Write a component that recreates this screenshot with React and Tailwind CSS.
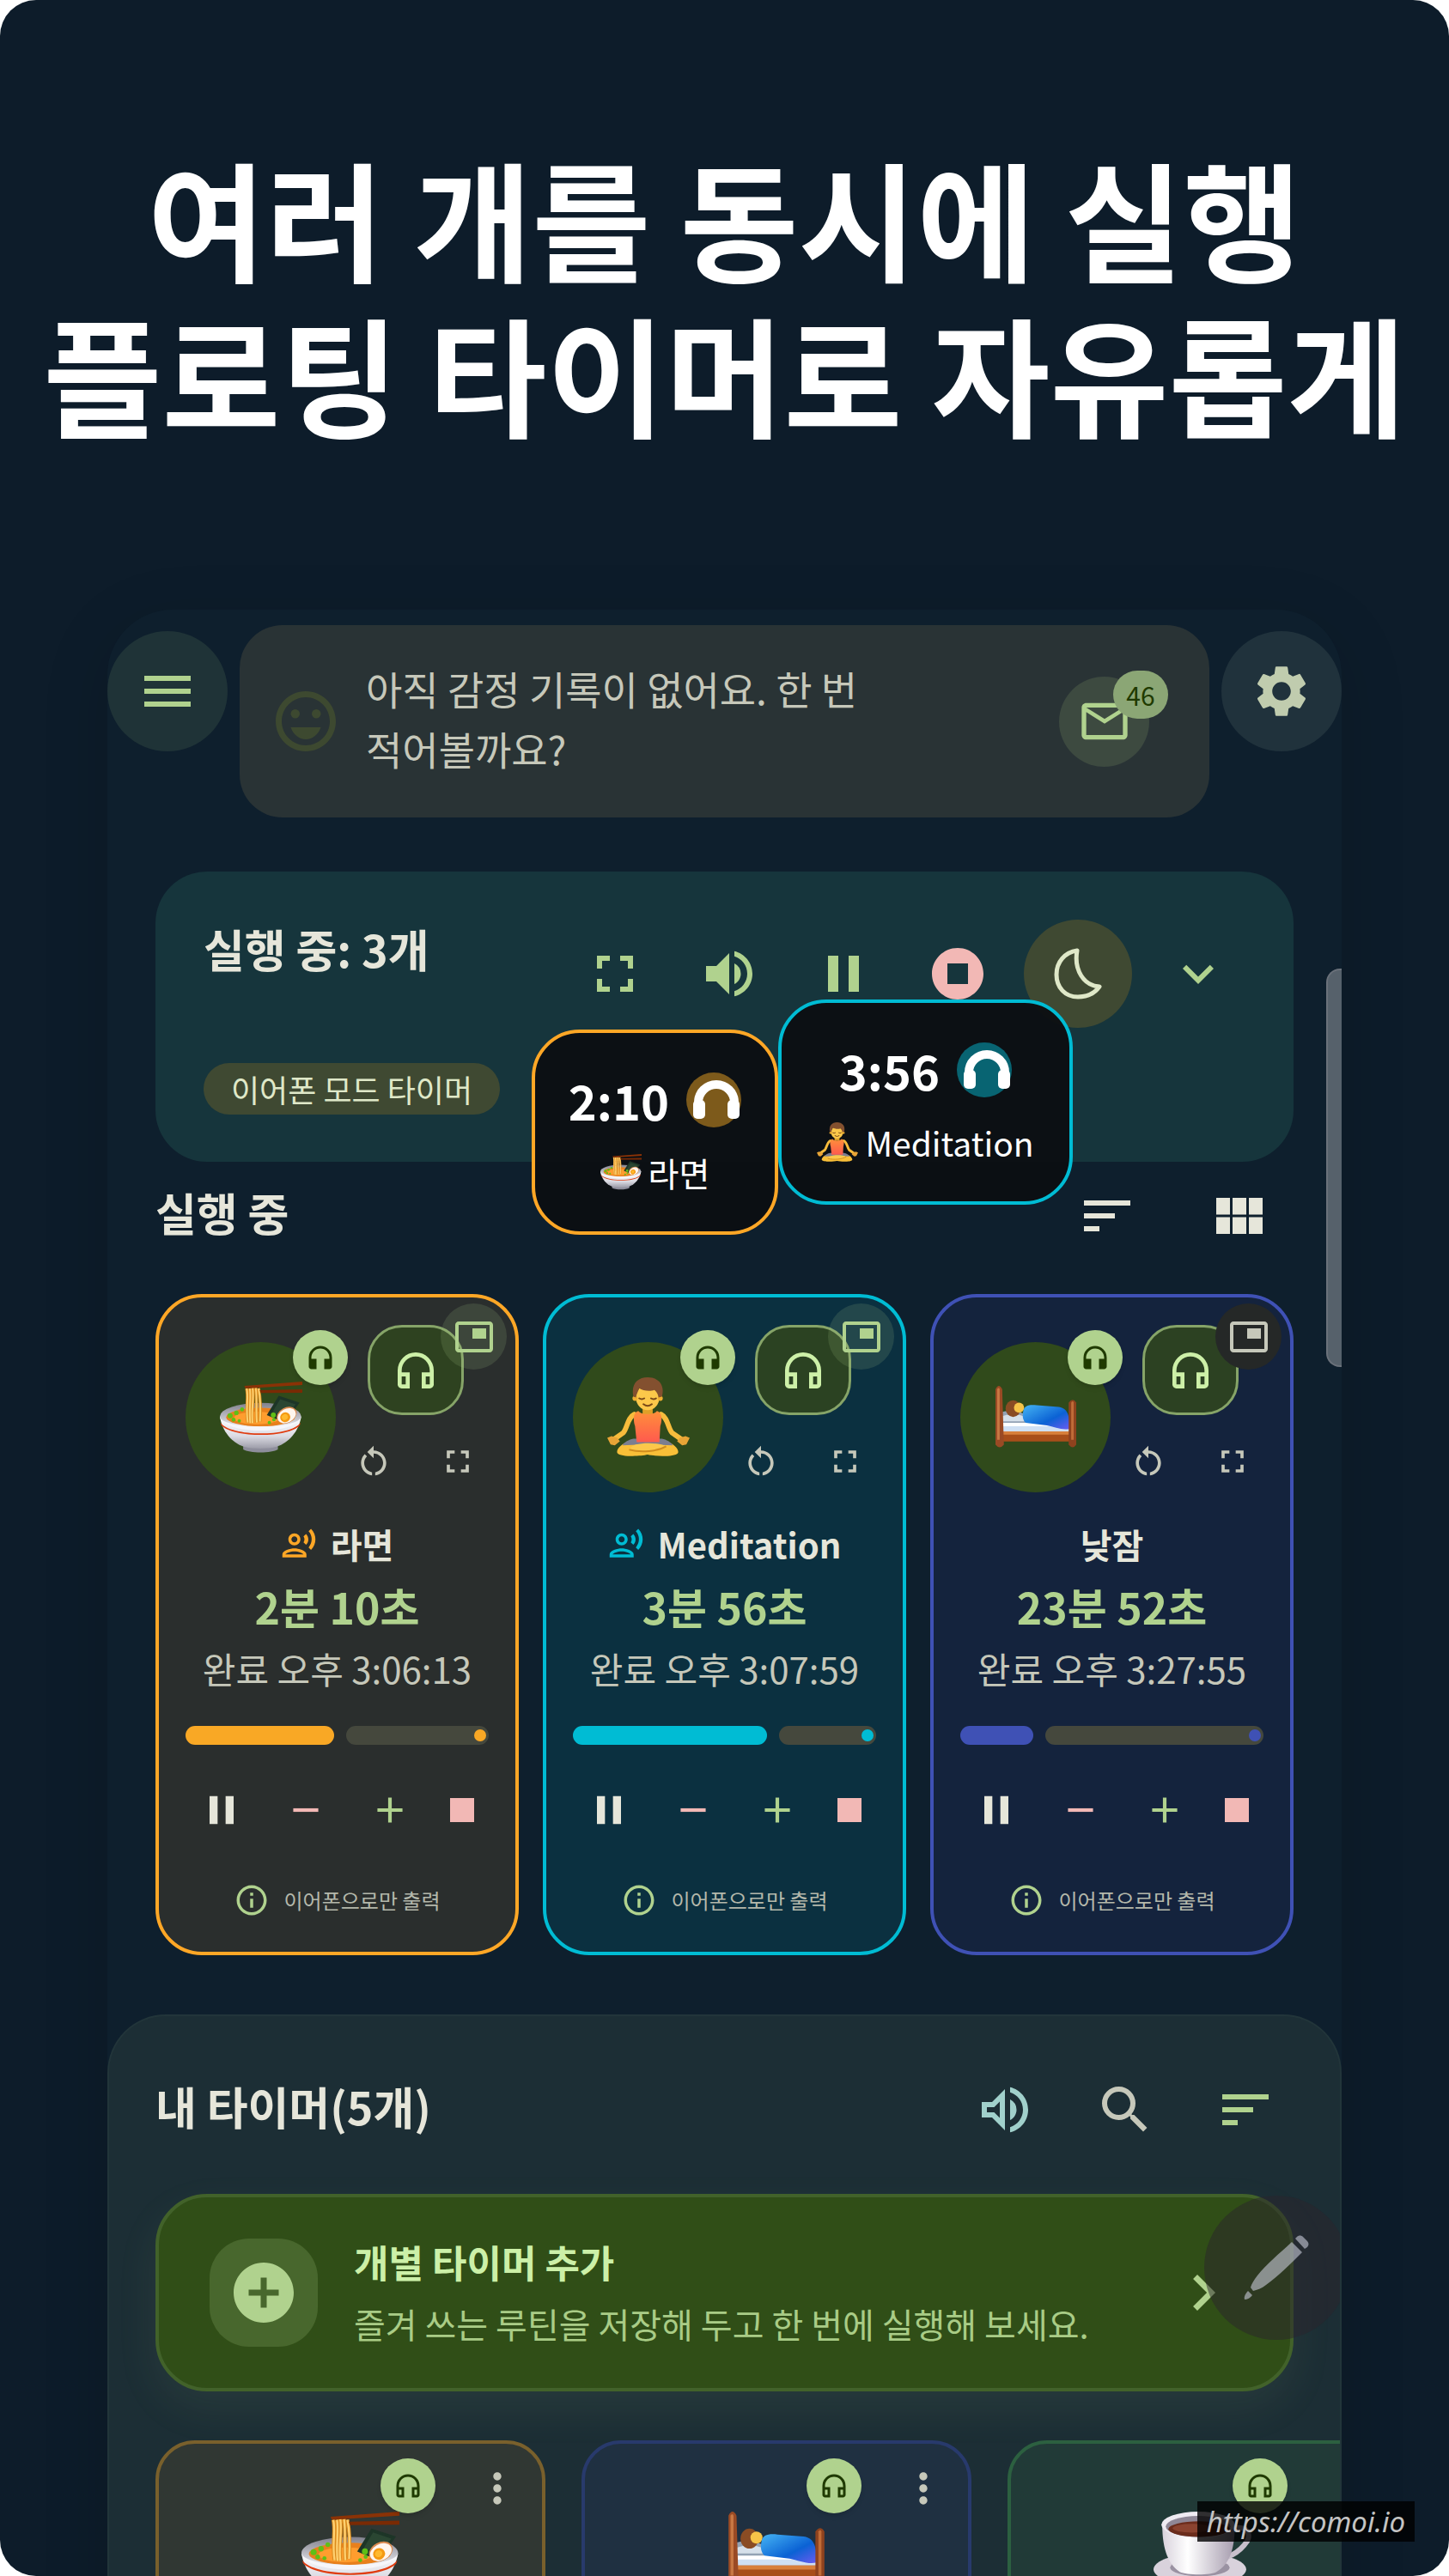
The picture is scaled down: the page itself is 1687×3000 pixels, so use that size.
import React from 'react';
import {
  MdAdd,
  MdAddCircle,
  MdChevronRight,
  MdExpandMore,
  MdFullscreen,
  MdHeadphones,
  MdMailOutline,
  MdMenu,
  MdMoreVert,
  MdOutlineEmojiEmotions,
  MdOutlineHeadphones,
  MdOutlineInfo,
  MdOutlineRecordVoiceOver,
  MdOutlineVolumeUp,
  MdPause,
  MdPictureInPictureAlt,
  MdRemove,
  MdRestartAlt,
  MdSearch,
  MdSettings,
  MdSort,
  MdStop,
  MdStopCircle,
  MdViewModule,
  MdVolumeUp,
} from 'react-icons/md';

const Ramen = ({ className }) => (
  <svg viewBox="0 0 290 250" className={className} aria-hidden="true">
    <defs>
      <linearGradient id="bowlBody" x1="0" y1="0" x2="0" y2="1">
        <stop offset="0" stopColor="#ffffff" />
        <stop offset="0.6" stopColor="#dcdce4" />
        <stop offset="1" stopColor="#9c9ca8" />
      </linearGradient>
      <linearGradient id="bowlRim" x1="0" y1="0" x2="0" y2="1">
        <stop offset="0" stopColor="#80808c" />
        <stop offset="1" stopColor="#f4f4f8" />
      </linearGradient>
    </defs>
    <path d="M82 225h122v14c-20 14-102 14-122 0z" fill="#8e8e9c" />
    <path d="M0 124c8 50 42 92 84 105 30 9 86 9 116 0 42-13 78-55 86-105z" fill="url(#bowlBody)" />
    <ellipse cx="143" cy="122" rx="143" ry="47" fill="url(#bowlRim)" />
    <ellipse cx="143" cy="125" rx="121" ry="33" fill="#e8801c" />
    <ellipse cx="130" cy="128" rx="80" ry="22" fill="#ff9d2e" />
    <path d="M165 118l42-68 73 24-34 48-48 10z" fill="#1d3527" />
    <path d="M182 112l30-50 54 18-27 36z" fill="#2a4632" />
    <path d="M94 24c8 30-4 70 4 120M105 24c6 30-4 80 2 122M115 22c6 40-6 80 0 124M126 22c6 40 0 80 4 122M136 24c6 30 8 70 5 116" fill="none" stroke="#d98a1c" strokeWidth="11" />
    <path d="M94 24c8 30-4 70 4 120M105 24c6 30-4 80 2 122M115 22c6 40-6 80 0 124M126 22c6 40 0 80 4 122M136 24c6 30 8 70 5 116" fill="none" stroke="#ffd070" strokeWidth="6" />
    <path d="M86 15L290 0v12L90 24z" fill="#8a3206" />
    <path d="M140 30l150-3v12l-146 1z" fill="#7a2a04" />
    <g transform="rotate(-28 235 118)">
      <ellipse cx="235" cy="118" rx="37" ry="27" fill="#d98a50" />
      <ellipse cx="234" cy="120" rx="34" ry="24" fill="#fff6ee" />
      <ellipse cx="227" cy="122" rx="18" ry="17" fill="#f59a12" />
      <ellipse cx="226" cy="121" rx="11" ry="10" fill="#ffb92e" />
    </g>
    <g fill="#5fbf16">
      <circle cx="36" cy="120" r="9" />
      <circle cx="58" cy="110" r="8" />
      <circle cx="78" cy="98" r="7" />
      <circle cx="48" cy="134" r="7" />
      <circle cx="68" cy="138" r="6" />
      <circle cx="188" cy="118" r="9" />
      <circle cx="190" cy="134" r="6" />
      <circle cx="174" cy="144" r="6" />
    </g>
    <path d="M2 144c34 50 246 52 282 0l-3 9c-38 46-234 46-276 0z" fill="#e03c10" />
    <path d="M0 122c0 30 70 50 143 50s143-20 143-50c0 20-60 36-143 36S0 142 0 122z" fill="#f6f6fa" />
  </svg>
);

const Meditating = ({ className }) => (
  <svg viewBox="0 0 98 94" className={className} aria-hidden="true">
    <defs>
      <linearGradient id="vest" x1="0" y1="0" x2="0" y2="1">
        <stop offset="0" stopColor="#ff8f3a" />
        <stop offset="1" stopColor="#ff5a4e" />
      </linearGradient>
    </defs>
    <path d="M32 44C24 48 24 60 19 66L6 75M64 44c8 4 8 16 13 22l13 9" fill="none" stroke="#f7bc3c" strokeWidth="6" strokeLinecap="round" strokeLinejoin="round" />
    <path d="M0 72l5-2 7 2 3 4-6 5-5-1zM98 72l-5-2-7 2-3 4 6 5 5-1z" fill="#e8a436" />
    <path d="M27 76c-10 2-17 10-15 14 4 5 28 4 36 2 8 2 32 3 36-2 2-4-5-12-15-14z" fill="#f9bf38" />
    <path d="M31 73c-5 1-11 4-13 8l24-1 6 3 6-3 24 1c-2-4-8-7-13-8z" fill="#7b7e90" />
    <path d="M34 80c10-3 30-2 36 2-8 6-30 8-44 4 2-3 4-5 8-6z" fill="#fcc84a" />
    <path d="M26 86c14 4 34 2 44-4" fill="none" stroke="#d18d1e" strokeWidth="2" />
    <path d="M42 34h12v10H42z" fill="#dfa028" />
    <path d="M37 40c3 5 19 5 22 0 7 2 6 12 4 18l-1 19H35l-2-19c-2-6-3-16 4-18z" fill="url(#vest)" />
    <ellipse cx="48" cy="24" rx="14" ry="15" fill="#fcc84a" />
    <circle cx="33" cy="25" r="3" fill="#f0b030" />
    <circle cx="63" cy="25" r="3" fill="#f0b030" />
    <path d="M31 23C28 8 36 0 48 0s21 8 17 23l-4 1c-1-5-3-7-5-9-5 2-14 1-18-2-1 3-3 6-4 11z" fill="#83502f" />
    <path d="M38 25q3 2 6 0M52 25q3 2 6 0M43 32q5 4 10 0" fill="none" stroke="#7a4a18" strokeWidth="2" strokeLinecap="round" />
  </svg>
);

const Sleeping = ({ className }) => (
  <svg viewBox="0 0 98 74" className={className} aria-hidden="true">
    <defs>
      <linearGradient id="blanket" x1="0" y1="0" x2="1" y2="1">
        <stop offset="0" stopColor="#45b4f4" />
        <stop offset="0.6" stopColor="#0b62d4" />
        <stop offset="1" stopColor="#6a5cf0" />
      </linearGradient>
    </defs>
    <path d="M8 43h82v12H8z" fill="#cfe0f4" />
    <path d="M8 43h82v5H8z" fill="#ffffff" />
    <path d="M9 31q14-4 28 3v10H9z" fill="#93a2b4" />
    <path d="M9 36q14-5 28 1l-2 5H9z" fill="#d6e0ea" />
    <ellipse cx="22" cy="27" rx="9" ry="10" fill="#8a4c24" />
    <circle cx="29" cy="26" r="6" fill="#f6c448" />
    <path d="M34 30c1-7 8-8 16-7l26 2c9 1 14 8 13 26-8 2-18-2-27-4l-25-3c-4-4-4-9-3-14z" fill="url(#blanket)" />
    <path d="M6 54h86v12H6z" fill="#a84e1a" />
    <path d="M6 54h86v4H6z" fill="#d8803c" />
    <path d="M1 4q4-8 8 0l2 66q-5 6-10 0z" fill="#9a4a24" />
    <path d="M3 4q2-3 3 0v60H3z" fill="#c87844" />
    <path d="M88 20q5-7 9 0v50q-4 6-9 0z" fill="#8e421e" />
    <path d="M91 20q2-3 3 0v44h-3z" fill="#c06c38" />
  </svg>
);

const Coffee = ({ className }) => (
  <svg viewBox="0 0 112 84" className={className} aria-hidden="true">
    <defs>
      <linearGradient id="cup" x1="0" y1="0" x2="1" y2="0">
        <stop offset="0" stopColor="#d8d2dc" />
        <stop offset="0.35" stopColor="#ffffff" />
        <stop offset="1" stopColor="#a69cae" />
      </linearGradient>
    </defs>
    <ellipse cx="53" cy="66" rx="53" ry="18" fill="#d9d2dc" />
    <ellipse cx="53" cy="64" rx="34" ry="10" fill="#9a92a2" />
    <path d="M90 20c18-6 24 8 14 18-6 7-14 12-20 14" fill="none" stroke="#c8c0cc" strokeWidth="6" />
    <path d="M10 15c0 30 8 46 20 54 8 4 36 4 42 0 14-8 21-24 21-54z" fill="url(#cup)" />
    <ellipse cx="51" cy="15" rx="42" ry="15" fill="#efebf2" />
    <ellipse cx="51" cy="17" rx="37" ry="12" fill="#8f8796" />
    <ellipse cx="52" cy="20" rx="35" ry="9" fill="#6b2c1c" />
    <ellipse cx="44" cy="19" rx="22" ry="5" fill="#8a4330" />
  </svg>
);

const MoonIcon = ({ className }) => (
  <svg viewBox="0 0 56 60" className={className} fill="none" stroke="currentColor" strokeWidth="5" strokeLinejoin="round" aria-hidden="true">
    <path d="M27 3C13 5 3 16 3 31c0 15 10 26 25 26 11 0 20-5 25-12-18-1-30-19-26-42z" />
  </svg>
);

const PenIcon = ({ className }) => (
  <svg viewBox="0 0 76 76" className={className} fill="currentColor" aria-hidden="true">
    <path d="M62 2c2-2 5-2 7 0l5 5c2 2 2 5 0 7l-3 2L60 4z" />
    <path d="M56 8l12 12c-14 14-28 28-42 38-5 4-11 6-15 7l-3-4c1-4 4-9 8-14C26 34 41 22 56 8z" />
    <path d="M5 65l5 5c-2 3-6 5-9 5-1-3 1-7 4-10z" />
  </svg>
);

const BandIcon = ({ className }) => (
  <svg viewBox="0 0 64 64" className={className} aria-hidden="true">
    <path d="M14 46V35a21 21 0 0 1 42 0v11" fill="none" stroke="#fff" strokeWidth="10" />
    <rect x="8" y="32" width="14" height="22" rx="5" fill="#fff" />
    <rect x="48" y="32" width="14" height="22" rx="5" fill="#fff" />
  </svg>
);

const emojis = { ramen: Ramen, meditation: Meditating, nap: Sleeping, coffee: Coffee };

const runningTimers = [
  {
    id: 'ramen',
    name: '라면',
    left: '2분 10초',
    done: '완료 오후 3:06:13',
    voice: true,
    progress: 49,
    card: 'border-[#ffa726] bg-[#2a2e2d]',
    accent: 'text-[#ffa726]',
    fill: 'bg-[#f9a825]',
    pip: 'bg-[#b0d28e]/15 text-[#b0d28e]',
  },
  {
    id: 'meditation',
    name: 'Meditation',
    left: '3분 56초',
    done: '완료 오후 3:07:59',
    voice: true,
    progress: 64,
    card: 'border-[#00bcd4] bg-[#0b3040]',
    accent: 'text-[#00bcd4]',
    fill: 'bg-[#00bcd4]',
    pip: 'bg-[#b0d28e]/15 text-[#b0d28e]',
  },
  {
    id: 'nap',
    name: '낮잠',
    left: '23분 52초',
    done: '완료 오후 3:27:55',
    voice: false,
    progress: 24,
    card: 'border-[#3f51b5] bg-[#14233d]',
    accent: 'text-[#3f51b5]',
    fill: 'bg-[#3f51b5]',
    pip: 'bg-[#252827] text-[#c6c8ba]',
  },
];

const savedTimers = [
  { id: 'ramen', card: 'border-[#79602c] bg-[#303733]' },
  { id: 'nap', card: 'border-[#283a6c] bg-[#1f3041]' },
  { id: 'coffee', card: 'border-[#2c6040] bg-[#213a37]' },
];

const IconButton = ({ label, className = '', children }) => (
  <button type="button" aria-label={label} className={`flex items-center justify-center shrink-0 ${className}`}>
    {children}
  </button>
);

const TimerCard = ({ timer }) => {
  const Emoji = emojis[timer.id];

  return (
    <article className={`relative flex-1 min-w-0 rounded-[54px] border-4 px-[31px] pt-8 pb-[39px] ${timer.card}`}>
      <div className="flex gap-2">
        <div className="relative mt-5 w-[175px] h-[175px] shrink-0 rounded-full bg-[#304a1b] flex items-center justify-center">
          <Emoji className="w-24" />
          <span className="absolute -top-[14px] -right-[14px] w-16 h-16 rounded-full bg-[#b0d28e] text-[#1f3a00] shadow-md flex items-center justify-center">
            <MdHeadphones className="size-9" />
          </span>
        </div>
        <div className="flex-1 flex flex-col items-center">
          <IconButton label="이어폰 모드" className="w-[112px] h-[105px] rounded-[40px] border-[3px] border-[#86a468] bg-[#2f451f]/90 text-[#cdf0a8]">
            <MdOutlineHeadphones className="size-14" />
          </IconButton>
          <div className="mt-8 flex gap-[54px] text-[#c6c8ba]">
            <IconButton label="다시 시작">
              <MdRestartAlt className="size-11" />
            </IconButton>
            <IconButton label="전체 화면">
              <MdFullscreen className="size-11" />
            </IconButton>
          </div>
        </div>
      </div>

      <IconButton label="플로팅" className={`absolute top-[7px] right-[10px] w-[77px] h-[77px] rounded-full ${timer.pip}`}>
        <MdPictureInPictureAlt className="size-12 -scale-y-100" />
      </IconButton>

      <h3 className="mt-9 h-12 flex items-center justify-center gap-4 text-[40px] font-bold text-[#e6e6da]">
        {timer.voice && <MdOutlineRecordVoiceOver className={`size-[42px] ${timer.accent}`} />}
        {timer.name}
      </h3>
      <p className="mt-3 text-center text-[50px] leading-[72px] font-bold text-[#b0d28e]">{timer.left}</p>
      <p className="mt-[7px] text-center text-[42px] leading-[60px] whitespace-nowrap text-[#c6c8ba]">{timer.done}</p>

      <div className="mt-[37px] flex gap-[14px]">
        <div className={`h-[22px] rounded-full ${timer.fill}`} style={{ width: `${timer.progress}%` }} />
        <div className="flex-1 h-[22px] rounded-full bg-[#45483d] flex items-center justify-end pr-[3px]">
          <span className={`w-[14px] h-[14px] rounded-full ${timer.fill}`} />
        </div>
      </div>

      <div className="mt-12 pl-[14px] flex gap-7">
        <IconButton label="일시정지" className="w-14 h-14 text-[#e6e6da]">
          <MdPause className="size-14" />
        </IconButton>
        <IconButton label="시간 빼기" className="w-14 h-14 mx-[14px] text-[#f2b8b5]">
          <MdRemove className="size-[50px]" />
        </IconButton>
        <IconButton label="시간 더하기" className="w-14 h-14 text-[#b0d28e]">
          <MdAdd className="size-[50px]" />
        </IconButton>
        <IconButton label="정지" className="w-14 h-14 text-[#f2b8b5]">
          <MdStop className="size-14" />
        </IconButton>
      </div>

      <p className="mt-14 h-[42px] flex items-center justify-center gap-4 text-2xl text-[#b4b8ab]">
        <MdOutlineInfo className="size-[42px] text-[#b0d28e]" />
        이어폰으로만 출력
      </p>
    </article>
  );
};

const FloatingTimer = ({ id, time, name, className, dot }) => {
  const Emoji = emojis[id];

  return (
    <div className={`absolute h-[239px] rounded-[56px] border-4 bg-[#0c0f12]/95 text-white flex flex-col items-center pt-9 ${className}`}>
      <div className="flex items-center gap-5">
        <span className="text-[56px] leading-[84px] font-bold">{time}</span>
        <span className={`w-16 h-16 rounded-full ${dot}`}>
          <BandIcon className="w-16" />
        </span>
      </div>
      <div className="flex items-center gap-2">
        <Emoji className="w-12" />
        <span className="text-[39px] leading-[84px]">{name}</span>
      </div>
    </div>
  );
};

const SavedCard = ({ timer }) => {
  const Emoji = emojis[timer.id];

  return (
    <article className={`relative w-[454px] h-[560px] shrink-0 rounded-[46px] border-4 ${timer.card}`}>
      <Emoji className="mx-auto mt-[79px] w-[114px]" />
      <span className="absolute top-[17px] right-[124px] w-16 h-16 rounded-full bg-[#b0d28e] text-[#1f3a00] shadow-md flex items-center justify-center">
        <MdOutlineHeadphones className="size-9" />
      </span>
      <IconButton label="더보기" className="absolute top-[24px] right-[24px] text-[#c6c8ba]">
        <MdMoreVert className="size-14" />
      </IconButton>
    </article>
  );
};

const App = () => {
  return (
    <div className="bg-white">
      <main className="relative h-screen overflow-hidden rounded-[42px] bg-[#0d1c2a] font-['Noto_Sans_CJK_KR',sans-serif]">
        <h1 className="pt-[161px] text-center text-[150px] leading-[181px] font-bold text-white whitespace-nowrap">
          <span className="block">여러 개를 동시에 실행</span>
          <span className="block">플로팅 타이머로 자유롭게</span>
        </h1>

        <div className="relative mx-[125px] mt-[187px] rounded-t-[76px] bg-[#0e1f2d] shadow-[0_20px_80px_rgba(0,0,0,0.14)]">
          {/* Top bar */}
          <header className="flex items-start gap-[14px] pt-[18px]">
            <IconButton label="메뉴" className="mt-[7px] w-[140px] h-[140px] rounded-full bg-[#1f3337] text-[#b0d28e]">
              <MdMenu className="size-[72px]" />
            </IconButton>
            <div className="flex-1 h-[224px] rounded-[50px] bg-[#293335] flex items-center pl-[35px] pr-[70px]">
              <MdOutlineEmojiEmotions className="size-[84px] shrink-0 text-[#3d4930]" />
              <p className="flex-1 ml-7 pb-2 text-[46px] leading-[70px] text-[#c6c8ba] whitespace-nowrap">
                아직 감정 기록이 없어요. 한 번
                <br />
                적어볼까요?
              </p>
              <div className="relative">
                <IconButton label="메시지" className="w-[105px] h-[105px] rounded-full bg-[#3d4a40] text-[#b0d28e]">
                  <MdMailOutline className="size-16" />
                </IconButton>
                <span className="absolute -top-[7px] -right-[22px] w-16 h-14 rounded-full bg-[#8ba675] text-[#1f3a00] text-3xl flex items-center justify-center">
                  46
                </span>
              </div>
            </div>
            <IconButton label="설정" className="mt-[7px] w-[140px] h-[140px] rounded-full bg-[#20323c] text-[#c0ccae]">
              <MdSettings className="size-[72px]" />
            </IconButton>
          </header>

          <div className="px-14">
            {/* Running summary */}
            <section className="mt-[63px] h-[338px] rounded-[60px] bg-[#16353c] pl-14 pr-12 pt-14 flex items-start justify-between">
              <div>
                <h2 className="text-[52px] leading-[68px] font-bold text-[#e6e6da]">실행 중: 3개</h2>
                <button type="button" className="mt-[99px] h-[60px] px-8 rounded-full bg-[#3f4932] text-4xl text-[#dfe8c8] flex items-center">
                  이어폰 모드 타이머
                </button>
              </div>
              <div className="flex gap-[7px] text-[#b0d28e]">
                <IconButton label="전체 화면" className="w-[126px] h-[126px]">
                  <MdFullscreen className="size-[72px]" />
                </IconButton>
                <IconButton label="소리" className="w-[126px] h-[126px]">
                  <MdVolumeUp className="size-[72px]" />
                </IconButton>
                <IconButton label="모두 일시정지" className="w-[126px] h-[126px]">
                  <MdPause className="size-[72px]" />
                </IconButton>
                <IconButton label="모두 정지" className="w-[126px] h-[126px] text-[#f2b8b5]">
                  <MdStopCircle className="size-[72px]" />
                </IconButton>
                <IconButton label="취침 모드" className="mx-[7px] w-[126px] h-[126px] rounded-full bg-[#3f4932] text-[#dfe8c8]">
                  <MoonIcon className="w-14" />
                </IconButton>
                <IconButton label="펼치기" className="w-[126px] h-[126px]">
                  <MdExpandMore className="size-[72px]" />
                </IconButton>
              </div>
            </section>

            <div className="h-[126px] mb-7 flex items-center justify-between">
              <h2 className="pb-2 text-[52px] leading-[68px] font-bold text-[#e6e6da]">실행 중</h2>
              <div className="flex gap-7 text-[#e6e6da]">
                <IconButton label="정렬" className="w-[126px] h-[126px]">
                  <MdSort className="size-[72px]" />
                </IconButton>
                <IconButton label="격자 보기" className="w-[126px] h-[126px]">
                  <MdViewModule className="size-[72px]" />
                </IconButton>
              </div>
            </div>

            <section className="flex gap-7">
              {runningTimers.map((timer) => (
                <TimerCard key={timer.id} timer={timer} />
              ))}
            </section>
          </div>

          {/* Saved timers */}
          <section className="relative mt-[69px] overflow-hidden rounded-t-[68px] border-2 border-b-0 border-[#22353a] bg-[#1c2e35] px-[54px] pt-[46px]">
            <div className="-mr-[7px] flex items-center justify-between">
              <h2 className="pb-2 text-[52px] leading-[68px] font-bold text-[#e6e6da]">내 타이머(5개)</h2>
              <div className="flex gap-[14px]">
                <IconButton label="소리" className="w-[126px] h-[126px] text-[#a0d0cb]">
                  <MdOutlineVolumeUp className="size-[72px]" />
                </IconButton>
                <IconButton label="검색" className="w-[126px] h-[126px] text-[#c6c8ba]">
                  <MdSearch className="size-[72px]" />
                </IconButton>
                <IconButton label="정렬" className="w-[126px] h-[126px] text-[#b0d28e]">
                  <MdSort className="size-[72px]" />
                </IconButton>
              </div>
            </div>

            <button type="button" className="mt-[35px] w-full h-[230px] rounded-[60px] border-4 border-[#42622a] bg-[#304e17] px-[59px] flex items-center text-left shadow-[0_20px_50px_rgba(176,210,142,0.08)]">
              <span className="w-[126px] h-[126px] shrink-0 rounded-[46px] bg-[#48672d] text-[#b0d28e] flex items-center justify-center">
                <MdAddCircle className="size-[84px]" />
              </span>
              <span className="flex-1 ml-[42px] flex flex-col whitespace-nowrap">
                <span className="text-[44px] leading-[72px] font-bold text-[#ccf0a8]">개별 타이머 추가</span>
                <span className="text-[40px] leading-[72px] text-[#a9cc86]">즐겨 쓰는 루틴을 저장해 두고 한 번에 실행해 보세요.</span>
              </span>
              <MdChevronRight className="size-[84px] shrink-0 text-[#b0d28e]" />
            </button>

            <div className="mt-[57px] flex gap-[42px]">
              {savedTimers.map((timer) => (
                <SavedCard key={timer.id} timer={timer} />
              ))}
            </div>

            <IconButton label="메모" className="absolute top-[209px] -right-[10px] w-[168px] h-[168px] rounded-full bg-[#2a242b]/50 text-[#c8ccd8]/60">
              <PenIcon className="w-[76px]" />
            </IconButton>
          </section>

          {/* Scroll thumb */}
          <div className="absolute top-[418px] right-0 w-[18px] h-[464px] rounded-l-2xl border-2 border-r-0 border-[#6a717a] bg-[#56616b]" />

          {/* Floating timers */}
          <FloatingTimer id="ramen" time="2:10" name="라면" className="top-[489px] left-[494px] w-[287px] border-[#ffa726]" dot="bg-[#7d5a1b]" />
          <FloatingTimer id="meditation" time="3:56" name="Meditation" className="top-[454px] left-[781px] w-[343px] border-[#00bcd4]" dot="bg-[#086472]" />
        </div>

        <a href="https://comoi.io" className="absolute bottom-10 right-10 h-[47px] px-[11px] flex items-center bg-black/80 font-['Noto_Sans',sans-serif] text-[33px] italic text-[#c4c4c4]">
          https://comoi.io
        </a>
      </main>
    </div>
  );
};

export default App;
